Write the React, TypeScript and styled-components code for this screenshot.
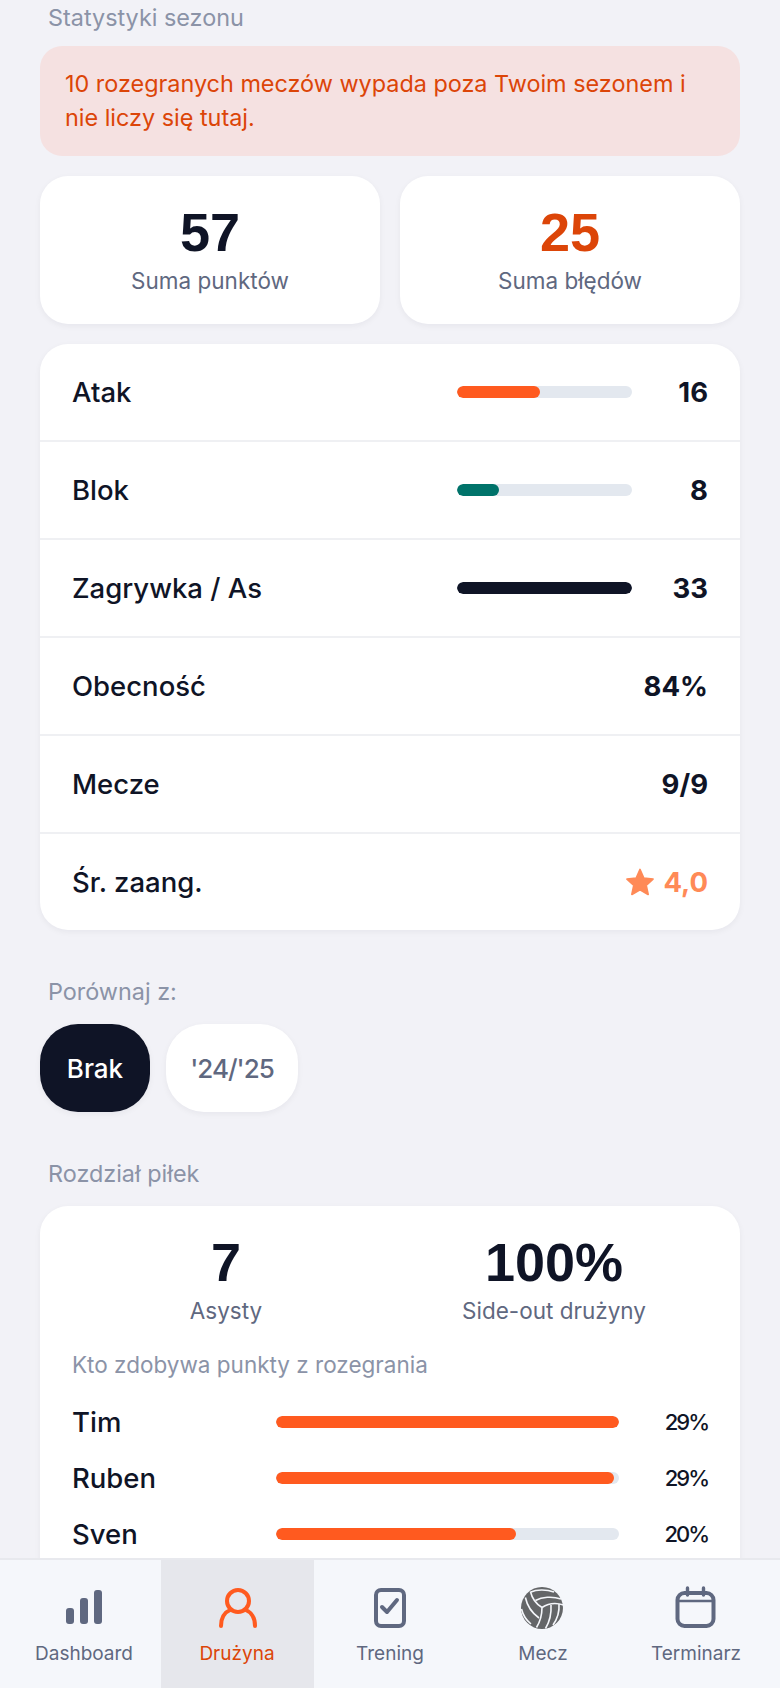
import React from 'react';
import styled, { createGlobalStyle } from 'styled-components';

const GlobalStyle = createGlobalStyle`
  html, body {
    margin: 0;
    padding: 0;
    background: #f2f2f7;
  }
  * {
    box-sizing: border-box;
  }
`;

const Screen = styled.div`
  width: 780px;
  height: 1688px;
  display: flex;
  flex-direction: column;
  overflow: hidden;
  background: #f2f2f7;
  font-family: Inter, 'Noto Sans', sans-serif;
  color: #0f1426;
`;

const Scroller = styled.div`
  flex: 1;
  min-height: 0;
  overflow: hidden;
  padding: 0 40px;
`;

const SectionTitle = styled.div<{ $top: number; $bottom: number }>`
  margin: ${p => p.$top}px 0 ${p => p.$bottom}px;
  padding-left: 8px;
  font-size: 23.4px;
  font-weight: 400;
  line-height: 36px;
  color: #8b93a7;
`;

const Alert = styled.div`
  height: 110px;
  padding: 21px 50px 21px 25px;
  border-radius: 22px;
  background: #f5e1e1;
  color: #dc4508;
  font-size: 23.4px;
  font-weight: 400;
  line-height: 34px;
`;

const TotalsGrid = styled.div`
  display: grid;
  grid-template-columns: 1fr 1fr;
  gap: 20px;
  margin-top: 20px;
`;

const Card = styled.div`
  background: #fff;
  border-radius: 28px;
  box-shadow: 0 2px 6px rgba(15, 20, 38, 0.05);
`;

const TotalCard = styled(Card)`
  height: 148px;
  padding-top: 26px;
  text-align: center;
`;

const BigNumber = styled.div<{ $danger?: boolean }>`
  font-family: 'Liberation Sans', Arial, sans-serif;
  font-size: 54px;
  font-weight: 700;
  line-height: 60px;
  color: ${p => (p.$danger ? '#dc4508' : '#0f1426')};
`;

const SmallLabel = styled.div`
  margin-top: 3px;
  font-size: 22.5px;
  font-weight: 400;
  line-height: 32px;
  color: #5f6880;
`;

const StatsCard = styled(Card)`
  margin-top: 20px;
`;

const StatRow = styled.div`
  height: 98px;
  padding: 0 32px;
  display: flex;
  align-items: center;
  border-bottom: 2px solid #eff0f3;

  &:last-child {
    height: 96px;
    border-bottom: 0;
  }
`;

const StatLabel = styled.div`
  flex: 1;
  font-size: 27.5px;
  font-weight: 550;
`;

const StatBar = styled.div`
  width: 175px;
  height: 12px;
  border-radius: 6px;
  background: #e3e8ef;
  overflow: hidden;
`;

const BarFill = styled.div<{ $color: string }>`
  height: 100%;
  border-radius: 6px;
  background: ${p => p.$color};
`;

const StatValue = styled.div<{ $wide?: boolean; $accent?: boolean }>`
  width: ${p => (p.$wide ? 'auto' : '76px')};
  display: flex;
  align-items: center;
  justify-content: flex-end;
  gap: 8px;
  font-size: 27.5px;
  font-weight: 700;
  color: ${p => (p.$accent ? '#ff8a57' : '#0f1426')};
`;

const Chips = styled.div`
  display: flex;
  gap: 16px;
`;

const Chip = styled.div<{ $active?: boolean; $width: number }>`
  width: ${p => p.$width}px;
  height: 88px;
  display: flex;
  align-items: center;
  justify-content: center;
  border-radius: 38px;
  font-size: 26px;
  font-weight: 550;
  letter-spacing: ${p => (p.$active ? '0' : '-1px')};
  background: ${p => (p.$active ? '#0f1426' : '#fff')};
  color: ${p => (p.$active ? '#fff' : '#5f6880')};
  box-shadow: 0 2px 6px rgba(15, 20, 38, 0.05);
`;

const DistributionCard = styled(Card)`
  padding: 26px 32px 0;
  height: 400px;
`;

const HeadlineGrid = styled.div`
  display: grid;
  grid-template-columns: 1fr 1fr;
  gap: 20px;
  text-align: center;
`;

const CardSubtitle = styled.div`
  margin: 22px 0 13px;
  font-size: 22.5px;
  font-weight: 400;
  line-height: 32px;
  color: #8b93a7;
`;

const PlayerRow = styled.div`
  height: 56px;
  display: grid;
  grid-template-columns: 204px 343px 1fr;
  align-items: center;
`;

const PlayerName = styled.div`
  font-size: 27.5px;
  font-weight: 550;
`;

const PlayerBar = styled(StatBar)`
  width: 343px;
`;

const PlayerPercent = styled.div`
  text-align: right;
  font-size: 22px;
  font-weight: 500;
  letter-spacing: -2px;
`;

const TabBar = styled.nav`
  height: 130px;
  flex: none;
  padding: 0 7.5px;
  display: grid;
  grid-template-columns: repeat(5, 1fr);
  background: #f5f7fb;
  border-top: 2px solid #e8e9ee;
`;

const Tab = styled.div<{ $active?: boolean }>`
  display: flex;
  flex-direction: column;
  align-items: center;
  padding-top: 28px;
  background: ${p => (p.$active ? '#e6e7ec' : 'transparent')};
  color: ${p => (p.$active ? '#dc4508' : '#5f6880')};
  font-size: 19px;
  font-weight: 400;
`;

const TabIcon = styled.svg`
  display: block;
  width: 48px;
  height: 48px;
  overflow: visible;
`;

const TabLabel = styled.span`
  margin-top: 4px;
  line-height: 28px;
`;

const StarIcon = styled.svg`
  width: 30px;
  height: 30px;
  fill: #ff8a57;
  stroke: #ff8a57;
  stroke-width: 1.4;
  stroke-linejoin: round;
`;

const statRows = [
  { label: 'Atak', value: '16', bar: 47.5, color: '#ff5a1f' },
  { label: 'Blok', value: '8', bar: 24, color: '#00736a' },
  { label: 'Zagrywka / As', value: '33', bar: 100, color: '#0f1426' },
  { label: 'Obecność', value: '84%' },
  { label: 'Mecze', value: '9/9' },
];

const players = [
  { name: 'Tim', percent: '29%', bar: 100 },
  { name: 'Ruben', percent: '29%', bar: 98.4 },
  { name: 'Sven', percent: '20%', bar: 70 },
];

const DashboardIcon = () => (
  <TabIcon viewBox="0 0 48 48" fill="#5f6880">
    <rect x="6" y="20" width="8" height="16" rx="3" />
    <rect x="20" y="10" width="8" height="26" rx="3" />
    <rect x="34" y="2" width="8" height="34" rx="3" />
  </TabIcon>
);

const TeamIcon = () => (
  <TabIcon viewBox="0 0 48 48" fill="none" stroke="#ff5a1f" strokeWidth="4" strokeLinecap="round">
    <circle cx="25" cy="13" r="11" />
    <path d="M8 38 C8 30 12 24 18 21.5 M42 38 C42 30 38 24 32 21.5" />
  </TabIcon>
);

const TrainingIcon = () => (
  <TabIcon viewBox="0 0 48 48" fill="none" stroke="#5f6880" strokeWidth="4" strokeLinecap="round" strokeLinejoin="round">
    <rect x="10" y="2" width="28" height="36" rx="5" />
    <path d="M16 19 L21 24 L31 12" />
  </TabIcon>
);

const MatchIcon = () => (
  <TabIcon viewBox="0 0 48 48">
    <g transform="translate(1 0)">
      <circle cx="22" cy="20" r="21" fill="#646668" />
      <g fill="none" stroke="#f5f7fb" strokeWidth="1.6">
        <path d="M10.4 3.5 C12 10 16 16 22 19.5" />
        <path d="M11 4 C16 1.5 26 1 34 4" />
        <path d="M15.4 12.5 C22 9 32 8 41 11" />
        <path d="M22 19.5 C28 15.5 36 14.5 43.5 17" />
        <path d="M5.4 9.5 C7 17 12 25 19 30" />
        <path d="M1.5 21 C3 27 6 32 11 36" />
        <path d="M22 19.5 C22 27 20.5 33 16.5 39.5" />
        <path d="M31 17 C31.5 25 30 33 25.5 40.5" />
        <path d="M39 16 C39.5 23 38 30 33 37" />
      </g>
    </g>
  </TabIcon>
);

const CalendarIcon = () => (
  <TabIcon viewBox="0 0 48 48" fill="none" stroke="#5f6880" strokeWidth="4" strokeLinecap="round">
    <rect x="5.5" y="5" width="36" height="33" rx="7" />
    <path d="M5.5 13 H41.5" strokeWidth="2.4" />
    <path d="M15.5 0 V7 M31.5 0 V7" strokeWidth="3.4" />
  </TabIcon>
);

const App: React.FC = () => {
  return (
    <Screen>
      <GlobalStyle />
      <Scroller>
        <SectionTitle $top={0} $bottom={10}>Statystyki sezonu</SectionTitle>
        <Alert>10 rozegranych meczów wypada poza Twoim sezonem i nie liczy się tutaj.</Alert>
        <TotalsGrid>
          <TotalCard>
            <BigNumber>57</BigNumber>
            <SmallLabel>Suma punktów</SmallLabel>
          </TotalCard>
          <TotalCard>
            <BigNumber $danger>25</BigNumber>
            <SmallLabel>Suma błędów</SmallLabel>
          </TotalCard>
        </TotalsGrid>
        <StatsCard>
          {statRows.map(row => (
            <StatRow key={row.label}>
              <StatLabel>{row.label}</StatLabel>
              {row.bar !== undefined && (
                <StatBar>
                  <BarFill $color={row.color} style={{ width: `${row.bar}%` }} />
                </StatBar>
              )}
              <StatValue>{row.value}</StatValue>
            </StatRow>
          ))}
          <StatRow>
            <StatLabel>Śr. zaang.</StatLabel>
            <StatValue $wide $accent>
              <StarIcon viewBox="0 0 24 24">
                <path d="M12 2 L15 8.8 L22.4 9.6 L16.9 14.6 L18.5 21.9 L12 18.2 L5.5 21.9 L7.1 14.6 L1.6 9.6 L9 8.8 Z" />
              </StarIcon>
              4,0
            </StatValue>
          </StatRow>
        </StatsCard>
        <SectionTitle $top={44} $bottom={14}>Porównaj z:</SectionTitle>
        <Chips>
          <Chip $active $width={110}>Brak</Chip>
          <Chip $width={132}>'24/'25</Chip>
        </Chips>
        <SectionTitle $top={44} $bottom={14}>Rozdział piłek</SectionTitle>
        <DistributionCard>
          <HeadlineGrid>
            <div>
              <BigNumber>7</BigNumber>
              <SmallLabel>Asysty</SmallLabel>
            </div>
            <div>
              <BigNumber>100%</BigNumber>
              <SmallLabel>Side-out drużyny</SmallLabel>
            </div>
          </HeadlineGrid>
          <CardSubtitle>Kto zdobywa punkty z rozegrania</CardSubtitle>
          {players.map(player => (
            <PlayerRow key={player.name}>
              <PlayerName>{player.name}</PlayerName>
              <PlayerBar>
                <BarFill $color="#ff5a1f" style={{ width: `${player.bar}%` }} />
              </PlayerBar>
              <PlayerPercent>{player.percent}</PlayerPercent>
            </PlayerRow>
          ))}
        </DistributionCard>
      </Scroller>
      <TabBar>
        <Tab>
          <DashboardIcon />
          <TabLabel>Dashboard</TabLabel>
        </Tab>
        <Tab $active>
          <TeamIcon />
          <TabLabel>Drużyna</TabLabel>
        </Tab>
        <Tab>
          <TrainingIcon />
          <TabLabel>Trening</TabLabel>
        </Tab>
        <Tab>
          <MatchIcon />
          <TabLabel>Mecz</TabLabel>
        </Tab>
        <Tab>
          <CalendarIcon />
          <TabLabel>Terminarz</TabLabel>
        </Tab>
      </TabBar>
    </Screen>
  );
};

export default App;
